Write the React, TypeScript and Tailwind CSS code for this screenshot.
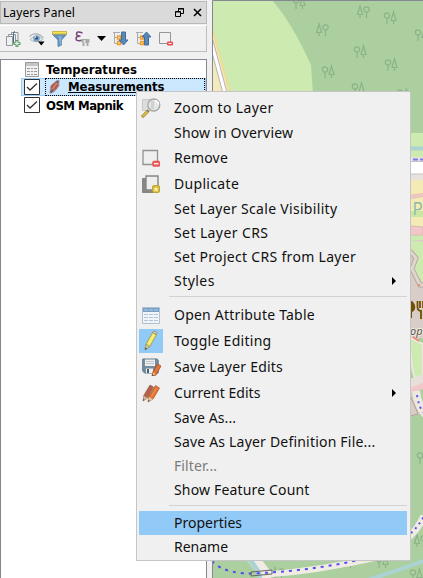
import type { ReactNode } from "react";

type IconProps = { className?: string };

const Svg = ({ w, h = w, children, className = "" }: { w: number; h?: number; children: ReactNode } & IconProps) => (
  <svg width={w} height={h} viewBox={`0 0 ${w} ${h}`} className={`shrink-0 ${className}`} fill="none">
    {children}
  </svg>
);

const AddGroup = () => (
  <Svg w={16}>
    <path d="M.5 5.500h6v9h-6zM2.500 5V3.500h7v9H7M5.500 3V1.500h6.500v9.500H9" stroke="#959995" />
    <path d="M7.500 12v-9.500q0-2 1.500-2" stroke="#396a9a" />
    <path d="M9.500 9h3v2h2v3h-2v2h-3v-2h-2v-3h2z" fill="#68a070" />
    <path d="M11 10.200v4.300M8.800 12.400h4.400" stroke="#e8f4e8" strokeWidth="1.200" />
  </Svg>
);
const Eye = () => (
  <Svg w={16}>
    <path d="M.5 5.500Q7-.5 14.500 7" stroke="#b4b8ba" strokeWidth="1.500" />
    <path d="M1 8.500Q7 2 14 8.500Q7 13 1 8.500z" fill="#e7edef" stroke="#b1babe" />
    <circle cx="7.500" cy="7.500" r="3.300" fill="#7ea2c1" />
    <circle cx="7.500" cy="7" r="1.700" fill="#305a80" />
    <circle cx="6.500" cy="6" r=".8" fill="#fff" />
    <path d="M9 10.500h6.500l-3.200 4z" fill="#000" />
  </Svg>
);
const Funnel = () => (
  <Svg w={15} h={16}>
    <path d="M.5 3.500h14L9.500 9v5L6 15.500V9z" fill="#6591bd" stroke="#5d8bb5" />
    <path d="M6.500 5h3v8l-1.500 1z" fill="#8db0d1" />
    <rect x=".5" y=".5" width="14" height="2.500" fill="#f7e44f" stroke="#cbb64a" />
  </Svg>
);
const Epsilon = () => (
  <Svg w={16}>
    <path d="M7.500 2Q1.500-.5 1.500 3q0 2 4 2Q1 5 1 7.500q0 3.500 7 1.500" stroke="#76477c" strokeWidth="1.500" />
    <path d="M6.500 8h8v3l-1 1v3h-2v-3h-2v3H7.500v-3l-1-1z" fill="#aaa" />
    <path d="M8.500 9h2v3h-2z" fill="#ddd" />
  </Svg>
);
const Tree = ({ up = false }: { up?: boolean }) => (
  <Svg w={16}>
    <path d="M0 1.500h7M1.500 2v10.500H5M1.500 6.500H5" stroke="#aaa" />
    <path d="M4.500 5h3v3h-3zM4.500 10.500h3v3h-3z" fill="#ffdd8d" stroke="#f49b2a" strokeWidth="1.300" />
    <path d={up ? "M10.500 1l4.500 5h-2.500v8H8.500V6H6z" : "M8.500 1h4v8H15l-4.500 5L6 9h2.500z"} fill="#5788b8" stroke="#416e9b" />
  </Svg>
);
const RemoveIcon = ({ small = false }: { small?: boolean }) => (
  <Svg w={small ? 14 : 18}>
    {small ? (
      <>
        <path d="M.5.5h11v11H.5z" stroke="#959595" />
        <rect x="8" y="9.500" width="6" height="4" rx="1" fill="#ee4a50" />
        <path d="M9.500 11.500h3" stroke="#fff" />
      </>
    ) : (
      <>
        <path d="M1 1.500h14.500v14H1z" fill="#efefef" stroke="#929290" strokeWidth="1.300" />
        <rect x="10.500" y="12" width="7.500" height="5.500" rx="1.500" fill="#f1555a" stroke="#e2484e" strokeWidth=".5" />
        <path d="M12 14.700h4.500" stroke="#fff" strokeWidth="1.300" />
      </>
    )}
  </Svg>
);
const Magnifier = () => (
  <Svg w={20}>
    <path d="M1.500 1.500h8v11h-8z" fill="#ddd" stroke="#c7c7c7" />
    <path d="M7.500 12.500L1 19" stroke="#807448" strokeWidth="3" />
    <path d="M6.500 13.500L1.500 18.500" stroke="#f3c928" strokeWidth="1.700" />
    <circle cx="12.800" cy="7" r="6" fill="#e4e6e5" stroke="#a2a5a4" strokeWidth="1.300" />
    <path d="M10 3h3v8h-3z" fill="#d0d2d1" />
    <path d="M14 2.500q3.500 1 3.500 4" stroke="#fff" strokeWidth="1.500" />
  </Svg>
);
const Duplicate = () => (
  <Svg w={18}>
    <path d="M.5 3.500h3v11h9v3H.5z" fill="#858783" stroke="#858783" />
    <path d="M4 1h12v14H4z" fill="#eee" stroke="#858783" strokeWidth="1.400" />
    <rect x="10.500" y="10.500" width="7" height="7" rx="1.500" fill="#d4b83f" stroke="#c0a237" />
    <path d="M14 11.500l.8 1.700 1.900.3-1.400 1.300.4 2-1.700-1-1.700 1 .4-2-1.400-1.300 1.900-.3z" fill="#fff2a5" />
  </Svg>
);
const Table = ({ small = false }: { small?: boolean }) => (
  <Svg w={small ? 14 : 18} h={small ? 15 : 17}>
    {small ? (
      <>
        <path d="M.5.5h13v14H.5z" fill="#f2f2f2" stroke="#999" />
        <path d="M1 1h12v3H1z" fill="#c4c4c4" />
        <path d="M2 6.500h3M6 6.500h2M9 6.500h3M2 9.500h3M6 9.500h2M9 9.500h3M2 12.500h3M6 12.500h2M9 12.500h3" stroke="#999" />
      </>
    ) : (
      <>
        <path d="M.5.500h17v16H.5z" fill="#f0f4f8" stroke="#b0c1d1" />
        <path d="M1 1h16v4H1z" fill="#74a0c9" />
        <path d="M2 7.500h4M7 7.500h4M12 7.500h4M2 10.500h4M7 10.500h4M12 10.500h4M2 13.500h4M7 13.500h4M12 13.500h4" stroke="#b3c4d8" />
        <path d="M2 3h4M7 3h4M12 3h4" stroke="#bad0e4" />
      </>
    )}
  </Svg>
);
const Pencil = () => (
  <Svg w={24} className="bg-[#91c9f7]">
    <path d="M6 21l1-6L13.500 3.500l4 2-6.500 12z" fill="#e6da6c" stroke="#9a9a4a" strokeWidth=".8" />
    <path d="M8.500 15L14 5l2 1-5.500 10z" fill="#f8f077" />
    <path d="M13.500 3.500l1-1.500q3 0 3.500 2l-.5 1.500z" fill="#d6d0c0" stroke="#858263" strokeWidth=".7" />
    <path d="M6 21l1-6 4 2.500z" fill="#c8c49b" stroke="#8c8a64" strokeWidth=".5" />
    <path d="M6 21l.5-2.500 1.500 1z" fill="#444" />
  </Svg>
);
const OrangePencil = () => (
  <>
    <path d="M9 17l1-4 4.500-8 3.500 2-5 9z" fill="#e17535" stroke="#a54823" strokeWidth=".8" />
    <path d="M9.300 16.500l1-3 2.400 1.500z" fill="#e9cba0" />
    <path d="M9 17l.5-1.700 1 .7z" fill="#333" />
  </>
);
const SaveIcon = () => (
  <Svg w={19} h={18}>
    <path d="M.7 1h14.500l1 1.500V15H2.500L.7 13z" fill="#748c9d" stroke="#627a8a" />
    <path d="M3 1.500h10V8H3zM4 10.500h7V15H4z" fill="#eee" />
    <path d="M4 3.500h8M4 5.500h8" stroke="#bcc5ca" />
    <path d="M5 11h2v4H5z" fill="#4b606e" />
    <g transform="translate(1 1)"><OrangePencil /></g>
  </Svg>
);
const EditsIcon = () => (
  <Svg w={20} h={19}>
    <path d="M2 17l1-6L9 1l3.500 2-6 11z" fill="#b66049" stroke="#8f6252" strokeWidth=".7" />
    <path d="M2 17l1-5 3.500 2z" fill="#ccb99a" />
    <path d="M7 18l1-6L14.500 1.500l4 2.500-6.500 11z" fill="#e06e31" stroke="#a55734" strokeWidth=".7" />
    <path d="M9.500 12.500l5.500-9 1.500.7-5.500 9.300z" fill="#f08a48" />
    <path d="M7 18l1-5 4 2z" fill="#e2c99e" />
    <path d="M7 18l.5-2 1.200.7zM2 17l.5-2 1 .7z" fill="#333" />
  </Svg>
);

const Checkbox = () => (
  <Svg w={16}>
    <path d="M.5.5h15v15H.5z" fill="#fff" stroke="#333" />
    <path d="M3 8l3 3L13 4.500" stroke="#333" strokeWidth="1.300" />
  </Svg>
);

type Item = { label: string; icon?: ReactNode; spacing?: string; arrow?: boolean; disabled?: boolean; active?: boolean };

const groups: Item[][] = [
  [
    { label: "Zoom to Layer", icon: <Magnifier />, spacing: "tracking-[0.36px]" },
    { label: "Show in Overview", spacing: "tracking-[0.19px]" },
    { label: "Remove", icon: <RemoveIcon />, spacing: "tracking-[0.18px]" },
    { label: "Duplicate", icon: <Duplicate />, spacing: "tracking-[0.32px]" },
    { label: "Set Layer Scale Visibility", spacing: "tracking-[0.31px]" },
    { label: "Set Layer CRS", spacing: "tracking-[0.4px]" },
    { label: "Set Project CRS from Layer", spacing: "tracking-[0.31px]" },
    { label: "Styles", spacing: "tracking-[0.45px]", arrow: true },
  ],
  [
    { label: "Open Attribute Table", icon: <Table />, spacing: "tracking-[0.21px]" },
    { label: "Toggle Editing", icon: <Pencil />, spacing: "tracking-[0.28px]" },
    { label: "Save Layer Edits", icon: <SaveIcon />, spacing: "tracking-[0.21px]" },
    { label: "Current Edits", icon: <EditsIcon />, spacing: "tracking-[0.05px]", arrow: true },
    { label: "Save As...", spacing: "tracking-[0.1px]" },
    { label: "Save As Layer Definition File...", spacing: "tracking-[0.2px]" },
    { label: "Filter...", spacing: "tracking-[0.1px]", disabled: true },
    { label: "Show Feature Count", spacing: "tracking-[0.16px]" },
  ],
  [{ label: "Properties", active: true }, { label: "Rename" }],
];

const MenuRow = ({ item }: { item: Item }) => (
  <div className={`flex items-center ${item.icon ? "h-[26px]" : "h-6"} ${item.active ? "bg-[#91c9f7]" : ""} ${item.disabled ? "text-[#7b7b7b]" : "text-[#111]"}`}>
    <span className="flex w-6 shrink-0 justify-center">{item.icon}</span>
    <span className={`ml-[11px] flex-1 whitespace-nowrap leading-6 ${item.spacing ?? ""}`}>{item.label}</span>
    {item.arrow && (
      <Svg w={4} h={8} className="mr-[11px]">
        <path d="M0 0l4 4L0 8z" fill="#000" />
      </Svg>
    )}
  </div>
);

const trees: [number, number, boolean][] = [
  [293, -3, false], [357, 6, true], [384, 12, false], [316, 24, true], [415, 29, false],
  [354, 46, false], [385, 59, false], [322, 66, false], [352, 83, false], [397, 89, false],
  [417, 452, false], [414, 535, true], [237, 539, true], [272, 568, true], [341, 556, true], [376, 556, false], [410, 569, false],
];

const TreePair = ({ x, y, flip }: { x: number; y: number; flip: boolean }) => (
  <g transform={`translate(${x} ${y})`} stroke="#8eb288" strokeWidth="1.200">
    <path d={flip ? "M3 0L.5 8.500h5zM3 8v4" : "M9.500 0L7 8.500h5zM9.500 8v4"} />
    <circle cx={flip ? 9.500 : 3} cy="3.500" r="2.700" />
    <path d={flip ? "M9.500 6V12" : "M3 6V12"} />
  </g>
);

const MapView = () => (
  <svg width="211" height="578" viewBox="212 0 211 578" fill="none" className="shrink-0">
    <rect x="212" width="211" height="578" fill="#abcf9f" />
    <path d="M212 0h60q20 23 39 65l2 30H212z" fill="#cdebb0" />
    <path d="M212 28l19 65h-19z" fill="#f5eabb" />
    <path d="M212 28l18 65" stroke="#efdc94" strokeWidth="2" />
    <path d="M211 41l14 52" stroke="#b4b4b4" strokeWidth="5" />
    <path d="M211 41l14 52" stroke="#fff" strokeWidth="3" />
    {trees.map(([x, y, flip]) => <TreePair key={`${x}-${y}`} x={x} y={y} flip={flip} />)}
    <path d="M410 133h13v115h-13z" fill="#cdebb0" />
    <path d="M410 148.500h13" stroke="#abd3d1" strokeWidth="4" />
    <path d="M410 157h13v5h-13zM410 174h13v6h-13z" fill="#e8e2df" />
    <path d="M413 159.500h5M420 159.500h3" stroke="#7b78f3" strokeWidth="2" />
    <path d="M410 162h13v12h-13z" fill="#fff" />
    <path d="M410 161.500h13M410 174h13" stroke="#c4c4c4" />
    <path d="M410 180h13v46h-13z" fill="#f4eab3" />
    <path d="M410 211h13v6h-13z" fill="#c9e6a3" />
    <path d="M410 197l13-2" stroke="#e7bdb4" strokeWidth="4" />
    <path d="M410 197l13-2" stroke="#eccac8" strokeWidth="2" />
    <text transform="translate(413 215) scale(.75 1)" fill="#83bca8" fontFamily="Liberation Sans" fontSize="19">P</text>
    <path d="M410 226l13 1v8h-13z" fill="#f1c7ca" stroke="#e2b7b1" />
    <path d="M410 240h13v98h-13z" fill="#d9cdc8" />
    <path d="M410 240l13 2v41q-6-10-13-13l6-12-6-4z" fill="#cdebb0" />
    <path d="M410 251l6 7-4 11 8 16h3" stroke="#b8aaa1" strokeWidth="5" />
    <path d="M410 251l6 7-4 11 8 16h3" stroke="#ded7ce" strokeWidth="3" />
    <path d="M410 301h2q4 3 3 8-1 3-3 3v6h-2z" fill="#745006" />
    <path d="M417.500 301v6q0 4 4 4M420 301v7M423 301v7M421 310v9" stroke="#745006" strokeWidth="1.800" />
    <text x="410" y="335" fill="#5b5549" stroke="#efe9df" strokeWidth="2" paintOrder="stroke" fontFamily="Noto Sans" fontSize="11" fontStyle="italic" textLength="12.500" lengthAdjust="spacingAndGlyphs">op</text>
    <path d="M410 338l13 6v32l-8 3q-5-15-5-41z" fill="#cdebb0" stroke="#eee8df" strokeWidth="2" />
    <path d="M413 337l6 4M418 285h2M410 382h2" stroke="#f3877a" strokeWidth="2" />
    <path d="M410 379l13-5v13l-13 5z" fill="#e7dfda" />
    <path d="M410 388l13-5v6l-13 5z" fill="#f1c7ca" />
    <path d="M410 394h7l6 19-13 4z" fill="#d9cdc8" />
    <path d="M416 391q2 15 10 24" stroke="#eee9df" strokeWidth="8" />
    <path d="M417 395q2 13 7 18" stroke="#5f5df0" strokeWidth="2" strokeDasharray="2 4" />
    <path d="M410 395l8 19-8 2" stroke="#b69f89" />
    <path d="M409 537q9-8 15-21" stroke="#f0ebe3" strokeWidth="7" />
    <path d="M411 533q7-6 13-17" stroke="#514ff0" strokeWidth="2" strokeDasharray="2 4" />
    <path d="M251 556l18 23" stroke="#f0ebe4" strokeWidth="12" />
    <path d="M246 556q9 8 15 22" stroke="#aad3d2" strokeWidth="5" />
    <path d="M262 575q56-4 117-18" stroke="#f0ebe3" strokeWidth="6" />
    <path d="M212 561q14 15 50 12 56-3 105-15" stroke="#514ff0" strokeWidth="2" strokeDasharray="3 5" />
    <path d="M364 581q30-9 59-20" stroke="#aad3d2" strokeWidth="4" />
    <path d="M251 572l21-2v4l-21 2z" stroke="#666" />
    <path d="M212.500 578V.5H423" stroke="#858792" />
  </svg>
);

export default function App() {
  return (
    <main className="relative flex h-[578px] w-[423px] overflow-hidden bg-[#f0f0f0] text-black">
      <aside className="flex w-[212px] shrink-0 flex-col font-['DejaVu_Sans_Condensed','DejaVu_Sans',sans-serif]">
        <header className="mt-px flex h-[23px] w-[207px] items-center border border-[#b9b9b9] bg-[#dadada] pl-[2px] pr-1">
          <span className="flex-1 whitespace-nowrap pt-px font-['Noto_Sans',sans-serif] text-[12px] leading-5 tracking-[0.08px]">Layers Panel</span>
          <Svg w={9} className="mr-[9px]">
            <path d="M3.500 3V.5h5v5H6M3 1h6M.5 3.500h5v5h-5zM0 4h6" stroke="#000" />
          </Svg>
          <Svg w={9}>
            <path d="M1 1l7 7M8 1L1 8" stroke="#000" strokeWidth="1.500" />
          </Svg>
        </header>
        <div className="mt-px flex h-[27px] w-[207px] items-center border-b border-r border-t border-[#bdbdbd] border-t-white pl-[6px]">
          <AddGroup />
          <span className="ml-[7px] flex"><Eye /></span>
          <span className="ml-[7px] flex"><Funnel /></span>
          <span className="ml-[8px] flex"><Epsilon /></span>
          <Svg w={9} h={5} className="ml-[6px]"><path d="M0 0h9L4.500 5z" fill="#000" /></Svg>
          <span className="ml-[7px] flex"><Tree /></span>
          <span className="ml-[7px] flex"><Tree up /></span>
          <span className="ml-[7px] flex"><RemoveIcon small /></span>
        </div>
        <section className="mt-[7px] flex w-[207px] flex-1 flex-col border-l border-r border-t border-[#858792] bg-white text-[13px] font-bold">
          <div className="flex h-[18px] items-center pl-6">
            <Table small /><span className="ml-[7px] pt-px">Temperatures</span>
          </div>
          <div className="ml-5 flex h-[18px] items-center border border-[#98cef8] bg-[#cce8ff] pl-[2px]">
            <Checkbox />
            <div className="ml-[5px] flex h-[18px] flex-1 items-center border border-dotted border-black pl-[3px]">
              <Svg w={11} h={16}>
                <path d="M1 14L1.500 7 7 2l3-1v6l-5 6z" fill="#a48086" stroke="#a09aa6" strokeWidth=".8" />
                <path d="M1.500 14L9 2" stroke="#71525c" strokeWidth="1.500" />
                <path d="M3 5.500l4-2 2.500 2.500-2 4-3.500 1-2-2z" fill="#b65b4c" />
                <path d="M3.500 10L8 4" stroke="#d8aaa0" />
              </Svg>
              <span className="ml-[8px] tracking-[-0.1px] underline">Measurements</span>
            </div>
          </div>
          <div className="flex h-[18px] items-center pl-[23px]">
            <Checkbox /><span className="ml-[6px] pt-px tracking-[-0.5px]">OSM Mapnik</span>
          </div>
        </section>
      </aside>
      <MapView />
      <nav className="absolute left-[136px] top-[91px] flex h-[470px] w-[275px] flex-col border border-[#c5c5c5] bg-[#f0f0f0] pl-[2px] pr-[3px] pt-[3px] font-['Noto_Sans',sans-serif] text-[14px]">
        {groups.map((group, index) => (
          <div key={group[0].label}>
            {index > 0 && <div className={`ml-[30px] border-t border-[#d2d2d2] ${index === 1 ? "mb-[5px] mt-[3px]" : "mb-[5px] mt-[3px]"}`} />}
            {group.map((item) => <MenuRow key={item.label} item={item} />)}
          </div>
        ))}
      </nav>
    </main>
  );
}
